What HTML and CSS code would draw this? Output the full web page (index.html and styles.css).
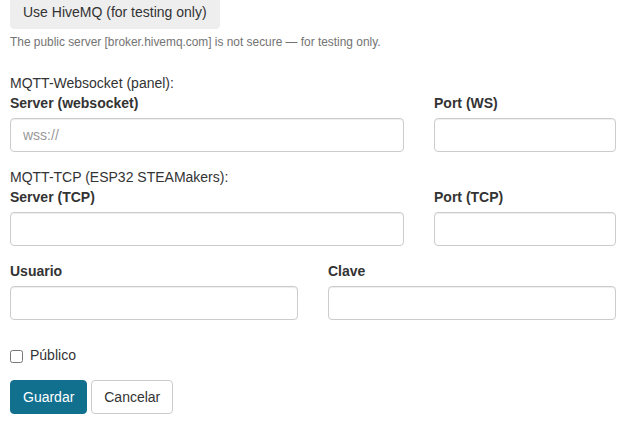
FILE: index.html
```html
<!DOCTYPE html>
<html lang="es">
<head>
    <meta charset="UTF-8">
    <meta name="viewport" content="width=device-width, initial-scale=1.0">
    <title>Broker MQTT</title>
    <link rel="stylesheet" href="styles.css">
</head>
<body>
    <form class="broker-form">
        <div class="preset">
            <button type="button" class="btn btn-light">Use HiveMQ (for testing only)</button>
            <p class="help">The public server [broker.hivemq.com] is not secure — for testing only.</p>
        </div>

        <div class="section-title">MQTT-Websocket (panel):</div>
        <div class="row row-wide">
            <div class="field">
                <label for="wsServer">Server (websocket)</label>
                <input type="text" id="wsServer" class="input" placeholder="wss://">
            </div>
            <div class="field">
                <label for="wsPort">Port (WS)</label>
                <input type="text" id="wsPort" class="input">
            </div>
        </div>

        <div class="section-title">MQTT-TCP (ESP32 STEAMakers):</div>
        <div class="row row-wide">
            <div class="field">
                <label for="tcpServer">Server (TCP)</label>
                <input type="text" id="tcpServer" class="input">
            </div>
            <div class="field">
                <label for="tcpPort">Port (TCP)</label>
                <input type="text" id="tcpPort" class="input">
            </div>
        </div>

        <div class="row row-half">
            <div class="field">
                <label for="user">Usuario</label>
                <input type="text" id="user" class="input">
            </div>
            <div class="field">
                <label for="pass">Clave</label>
                <input type="password" id="pass" class="input">
            </div>
        </div>

        <label class="checkbox">
            <input type="checkbox" id="isPublic">
            <span>Público</span>
        </label>

        <div class="actions">
            <button type="submit" class="btn btn-primary">Guardar</button>
            <button type="button" class="btn btn-default">Cancelar</button>
        </div>
    </form>
</body>
</html>
```

FILE: styles.css
```css
body {
    margin: 0;
    padding: 0 10px;
    background: #fff;
    font-family: "Liberation Sans", Arial, sans-serif;
    font-size: 14px;
    line-height: 20px;
    color: #333;
}
.broker-form {
    width: 606px;
}
.preset {
    margin-top: -5px;
    margin-bottom: 22px;
}
.help {
    margin: 5px 0 0;
    font-size: 11.9px;
    line-height: 17px;
    color: #737373;
}
.section-title {
    line-height: 20px;
}
.row {
    display: grid;
    column-gap: 30px;
    margin-bottom: 15px;
}
.row-wide {
    grid-template-columns: 1fr 182px;
}
.row-half {
    grid-template-columns: 1fr 1fr;
}
.field label {
    display: block;
    font-weight: bold;
    margin-bottom: 5px;
}
.input {
    display: block;
    box-sizing: border-box;
    width: 100%;
    height: 34px;
    padding: 6px 12px;
    font-family: inherit;
    font-size: 14px;
    color: #555;
    background: #fff;
    border: 1px solid #ccc;
    border-radius: 4px;
    box-shadow: inset 0 1px 1px rgba(0,0,0,0.075);
    outline: none;
}
.input::placeholder {
    color: #999;
}
.checkbox {
    display: flex;
    align-items: flex-start;
    gap: 7px;
    margin: 25px 0 15px;
}
.checkbox input {
    margin: 5px 0 0;
    width: 13px;
    height: 13px;
}
.btn {
    display: inline-block;
    box-sizing: border-box;
    height: 34px;
    padding: 6px 12px;
    font-family: inherit;
    font-size: 14px;
    line-height: 20px;
    border: 1px solid transparent;
    border-radius: 4px;
    cursor: pointer;
}
.btn-light {
    background: #eee;
    border-color: #eee;
    color: #333;
}
.btn-primary {
    background: #12708f;
    border-color: #12708f;
    color: #fff;
}
.btn-default {
    background: #fff;
    border-color: #ccc;
    color: #333;
}
```
